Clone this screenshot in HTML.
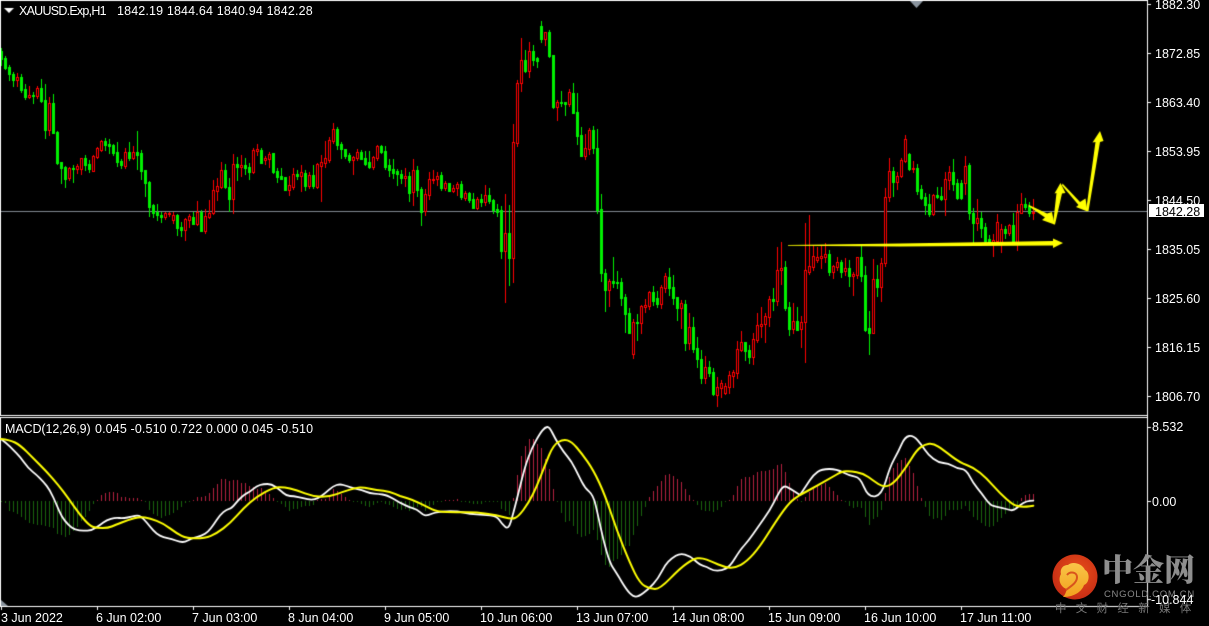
<!DOCTYPE html>
<html><head><meta charset="utf-8"><title>XAUUSD H1</title>
<style>
html,body{margin:0;padding:0;background:#000;width:1209px;height:626px;overflow:hidden}
#w{position:relative;width:1209px;height:626px;background:#000;overflow:hidden;font-family:"Liberation Sans","Noto Sans CJK SC",sans-serif;font-size:12.5px;color:#fff}
canvas,svg{position:absolute;left:0;top:0}
.t{position:absolute;white-space:pre;line-height:14px;height:14px}
</style></head><body><div id="w">
<canvas id="c" width="1209" height="626"></canvas>
<svg width="1209" height="626" viewBox="0 0 1209 626">
<defs>
<radialGradient id="rg" cx="55%" cy="40%" r="65%"><stop offset="0" stop-color="#e9501a"/><stop offset="1" stop-color="#c42a14"/></radialGradient>
<linearGradient id="yg" x1="0" y1="0" x2="0" y2="1"><stop offset="0" stop-color="#f9c548"/><stop offset="1" stop-color="#f2a21e"/></linearGradient>
</defs>
<circle cx="1075" cy="577" r="22.5" fill="url(#rg)"/>
<path d="M1063,597 C1075,597 1082,591 1084,585 C1090,583 1090,572 1085,570 C1082,563 1072,561 1068,565 C1062,565 1060,570 1061,574 C1057,581 1062,588 1067,589 C1066,592 1065,595 1063,597 Z" fill="url(#yg)"/>
<path d="M1067,575 C1070,571 1077,572 1077,577 C1077,583 1071,586 1066,590" fill="none" stroke="#d9541c" stroke-width="2"/>
</svg>
<div class="t" style="left:19px;top:4px;letter-spacing:-0.75px">XAUUSD.Exp,H1</div>
<div class="t" style="left:117px;top:4px;letter-spacing:0.15px">1842.19 1844.64 1840.94 1842.28</div>
<div class="t" style="left:1155px;top:-2px">1882.30</div>
<div class="t" style="left:1155px;top:47px">1872.85</div>
<div class="t" style="left:1155px;top:96px">1863.40</div>
<div class="t" style="left:1155px;top:145px">1853.95</div>
<div class="t" style="left:1155px;top:194px">1844.50</div>
<div class="t" style="left:1155px;top:243px">1835.05</div>
<div class="t" style="left:1155px;top:292px">1825.60</div>
<div class="t" style="left:1155px;top:341px">1816.15</div>
<div class="t" style="left:1155px;top:390px">1806.70</div>
<div style="position:absolute;left:1149px;top:204px;width:55px;height:13px;background:#fff"></div>
<div class="t" style="left:1155px;top:205px;color:#000">1842.28</div>
<div class="t" style="left:5px;top:422px;letter-spacing:-0.1px">MACD(12,26,9)</div>
<div class="t" style="left:95px;top:422px;letter-spacing:0.13px">0.045 -0.510 0.722 0.000 0.045 -0.510</div>
<div class="t" style="left:1152px;top:420px">8.532</div>
<div class="t" style="left:1152px;top:495px">0.00</div>
<div class="t" style="left:1102px;top:551px;height:40px;line-height:40px;font-family:'Liberation Serif','Noto Serif CJK SC',serif;font-weight:900;font-size:31px;color:#8e8e8e">中金网</div>
<div class="t" style="left:1104px;top:588px;font-size:9.5px;letter-spacing:0.7px;color:#888">CNGOLD.COM.CN</div>
<div class="t" style="left:1055px;top:602px;font-size:11.5px;letter-spacing:9.3px;color:#777">中文财经新媒体</div>
<div class="t" style="left:1151px;top:593px">-10.844</div>
<div class="t" style="left:1px;top:611px">3 Jun 2022</div>
<div class="t" style="left:96px;top:611px">6 Jun 02:00</div>
<div class="t" style="left:192px;top:611px">7 Jun 03:00</div>
<div class="t" style="left:288px;top:611px">8 Jun 04:00</div>
<div class="t" style="left:384px;top:611px">9 Jun 05:00</div>
<div class="t" style="left:480px;top:611px">10 Jun 06:00</div>
<div class="t" style="left:576px;top:611px">13 Jun 07:00</div>
<div class="t" style="left:672px;top:611px">14 Jun 08:00</div>
<div class="t" style="left:768px;top:611px">15 Jun 09:00</div>
<div class="t" style="left:864px;top:611px">16 Jun 10:00</div>
<div class="t" style="left:960px;top:611px">17 Jun 11:00</div>
</div>
<script>
var A="g145,153,177,195 g168,174,203,206 g195,201,222,240 g215,222,240,258 r218,231,240,258 g222,231,270,276 g252,267,291,297 r258,285,291,295 g276,285,288,309 r258,264,288,294 g237,264,303,306 g252,300,390,414 r291,309,390,405 g282,309,399,400 g393,396,489,492 g486,486,504,549 g498,500,537,561 r500,504,534,540 g495,504,507,546 r492,498,507,519 r474,474,507,522 g465,474,495,510 g480,492,507,516 r465,468,513,513 r441,444,471,474 r420,423,450,453 g414,423,435,450 g417,432,438,459 g432,435,459,465 g426,456,486,498 g477,483,495,504 r444,456,498,504 g426,456,474,480 r438,456,474,477 g393,456,465,507 g450,459,513,537 g510,510,549,588 g543,546,621,648 g612,615,639,651 g612,636,645,660 g636,645,651,666 r636,639,651,657 r636,639,642,648 r636,645,660,669 g642,645,684,705 g666,681,690,708 r654,657,690,720 r642,648,660,681 g636,651,672,672 r603,636,672,675 g630,636,693,693 r627,648,693,699 r600,639,651,654 r540,570,639,642 r534,558,573,600 r486,510,561,564 g492,510,561,564 g534,561,597,633 r462,492,597,639 g471,492,501,540 r465,495,501,528 g474,495,504,522 g489,501,516,537 r444,450,516,519 r432,447,453,465 g444,450,489,489 r468,474,480,492 r456,462,477,501 g459,459,516,519 g504,513,531,546 g504,528,537,537 g531,531,570,570 r528,555,570,585 r504,522,561,567 g510,522,528,537";
var B="r495,516,528,573 g510,519,558,570 r516,525,558,564 g495,525,558,564 r489,492,561,564 r465,486,498,603 r423,474,489,501 r411,420,480,486 r369,387,423,429 g381,387,435,447 g426,432,447,474 g447,447,468,474 g459,465,480,486 r468,471,480,522 r447,456,474,480 g450,456,477,477 g453,474,492,495 g453,486,501,504 r468,471,501,507 r435,438,474,480 g435,438,456,459 g438,453,501,507 g477,495,510,528 g477,507,519,534 g507,513,522,555 g510,522,534,549 r504,528,534,558 g516,528,579,603 r477,510,576,615 g498,510,570,588 g561,567,636,675 r567,582,633,645 r516,537,585,597 r510,537,540,549 r516,528,537,555 g516,525,564,570 r543,549,564,570 g549,549,573,573 r555,564,573,576 r546,552,564,585 g543,552,591,597 r573,579,594,600 g576,579,600,606 g579,597,624,624 r591,597,624,627 g582,597,606,618 r555,585,606,615 g564,585,603,609 g597,600,630,639 g612,627,636,648 g618,630,753,774 r582,699,753,906 g615,699,774,855 r372,426,774,846 r240,249,429,438 r114,180,249,273 g150,180,213,216 r126,153,213,231 g135,153,180,195 g171,174,183,201 g63,78,117,126 r96,96,117,135 g90,96,168,171 g165,165,321,324 r300,306,321,360 g273,306,309,318 g306,306,312,345 r267,276,312,318 g249,279,339,339 g279,336,408,432 g381,405,468,468 r402,444,468,477 r384,390,447,462 g378,390,444,459 g387,444,630,639";
var C="g-168,-123,69,93 g57,69,120,183 r87,93,120,168 g21,93,99,111 g63,96,99,114 g84,96,144,165 g132,141,192,246 g174,189,249,249 r207,216,312,324 g192,216,219,270 r165,168,219,249 r147,165,171,186 r123,126,168,177 g108,126,153,165 g123,144,162,171 r105,111,162,174 r69,78,114,126 g54,81,114,135 g75,111,144,162 g141,141,174,210 r150,159,174,234 g150,162,279,300 r189,231,279,297 g201,231,297,306 g261,294,327,351 g300,327,384,399 r318,351,384,399 g333,351,369,378 g354,366,432,435 r381,411,435,468 r390,399,414,441 r399,408,429,432 r363,375,411,429 r360,366,378,411 r273,297,369,384 r243,276,300,303 g276,276,303,330 g285,300,321,339 r249,267,321,342 r189,225,270,276 r171,222,228,261 r189,198,222,276 r138,147,201,228 g114,147,153,180 r-9,60,153,165 r-24,54,60,102 g33,51,174,180 g156,171,237,255 r159,213,237,249 g171,213,240,240 r198,216,237,291 r-81,60,216,336 r-105,48,66,72 r-15,18,51,60 r-9,21,30,36 r-15,18,24,54 r-21,12,21,36 g0,12,66,75 r45,48,66,84 r21,36,51,60 g30,36,66,81 r24,54,63,75 g30,54,78,108 r66,72,78,135 r21,21,75,84 g-15,21,78,93 g48,75,240,243 g183,234,249,312 r27,87,249,249 g45,87,111,138 r24,39,111,153 r-186,-159,39,48 r-276,-237,-159,-147 g-249,-237,-204,-162 r-234,-222,-204,-183";
var D="r114,120,168,171 r45,57,123,126 g99,102,147,150 r123,144,147,156 g132,144,213,222 g195,207,234,237 g219,231,255,282 g222,252,282,288 r222,225,282,285 g201,225,231,234 g201,228,237,240 r156,177,237,285 r138,156,180,207 g117,156,192,210 g177,189,234,237 g180,189,234,237 r108,138,189,222 g129,135,279,297 g264,279,309,366 r237,294,309,330 g276,294,324,351 g309,321,363,366 g345,357,366,372 r342,360,366,408 r282,306,363,366 r312,327,366,396 g318,327,339,354 r312,315,339,345 g279,315,366,366 r252,276,366,390 r219,252,279,279 g234,252,261,267 g246,258,279,288 r237,276,279,297";
var H5=[0,-6,-30,-33,-39,-48,-57,-66,-68,-72,-72,-75,-78,-81,-99,-102,-108,-102,-90,-78,-60,-48,-30,-9,3,18,24,27,27,24,12,12,9,9,9,3,-3,-27,-39,-45,-51,-45,-42,-36,-27,-18,-6,-3,3,12,12,15,24,39,51,66,66,60,63,63,54,54,45,42,36,39,27,21,9,-3,-9,-18,-30,-24,-24,-18,-15,-15,-12,3,6,6,12,36,30,21,12,3,-3,-3,-9,-15,-18,-12,-6,-3,-9,-12,-18,-24,
-27,-24,-30,-27,-18,-18,-30,-15,-12,0,0,3,3,3,6,0,-3,-6,-9,-9,-9,-3,-3,-3,-3,-24,-30,-42,9,78,135,165,186,186,171,159,126,96,36,-3,-36,-63,-60,-75,-99,-108,-105,-99,-87,-117,-162,-192,-198,-180,-174,-162,-135,-135,-102,-75,-45,-18,12,30,45,60,78,81,75,66,57,36,18,3,-12,-27,-30,-30,-33,-27,-18,-3,3,18,45,66,72,72,78,87,90,90,93,96,108,111,87,54,30,6,
-3,12,27,39,45,48,54,42,30,18,3,-3,-15,-21,-18,-21,-48,-72,-54,-48,-27,24,72,99,114,123,129,105,84,45,9,-18,-45,-54,-51,-57,-45,-27,-27,-27,-24,-15,-30,-48,-57,-66,-75,-78,-75,-63,-51,-39,-24,-24,-15,9,18,21,21];
var W=[[0,[3,87,20,100,40,120,60,140,85,175,110,195,130,215,150,240,170,285,185,320,205,345,225,360,250,362,275,362,300,345,320,330,345,323,370,325,395,320,415,315,430,325,450,350,470,372,490,382,515,387,540,396,555,396,575,385,605,378,625,365,640,345,660,315,680,298,695,295,715,270,735,252,750,245,770,228,790,222,815,222,840,240,860,258,880,258,910,265,935,270,955,265,975,250,1000,228,1020,222,1040,228,1060,235,1085,240,1110,250,1135,252,1160,255,1200,278]],
[400,[0,278,30,293,50,297,70,316,85,316,110,305,170,303,210,312,250,314,290,318,305,340,325,360,340,310,355,250,375,170,395,115,420,70,435,52,448,50,465,85,490,125,515,155,535,195,555,235,580,255,595,320,610,390,630,460,650,490,680,540,700,560,715,560,745,538,775,505,795,465,815,445,840,430,870,438,900,465,920,470,940,482,965,482,990,470,1020,420,1045,393,1075,350,1110,300,1130,260,1150,226,1170,235,1200,255]],
[800,[0,255,20,225,40,195,65,177,110,177,150,198,180,202,205,262,245,256,270,170,295,125,315,80,340,76,365,105,385,135,415,158,445,160,470,175,498,178,520,220,545,250,570,285,590,290,620,297,640,303,660,285,680,273,700,272]]];
var Y=[[0,[3,87,30,90,60,105,100,145,140,185,175,225,205,265,240,315,270,348,290,354,325,354,345,345,385,330,420,320,450,325,490,340,530,370,560,385,615,385,650,370,690,340,730,295,770,260,820,233,850,231,890,240,940,260,990,260,1030,245,1070,233,1090,232,1130,240,1170,245,1200,258]],
[400,[0,258,40,270,80,290,110,305,170,307,230,307,290,315,335,328,355,320,385,280,410,230,435,165,460,105,490,87,515,95,545,130,580,180,615,255,650,360,690,460,720,520,750,537,780,537,840,475,880,447,905,443,935,455,975,472,1005,474,1040,455,1080,410,1130,330,1170,275,1200,255]],
[800,[0,255,50,228,90,205,125,185,150,183,190,190,220,212,250,232,280,222,320,170,350,120,375,103,400,100,430,120,480,158,520,172,560,205,600,250,640,285,660,290,680,290,700,287]]];
var g=document.getElementById('c').getContext('2d');
function R(c,x,y,w,h){g.fillStyle=c;g.fillRect(x,y,w,h)}
R('#000',0,0,1209,626);
R('#808890',1,211,1146,1);
var i=0;
function draw(s,off){s.split(' ').forEach(function(k){
 var col=1+4*i;i++;
 var red=k[0]=='r',c=red?'#ff0000':'#00f000';
 var v=k.slice(1).split(',').map(function(n){return Math.round(off+(+n)/3)});
 R(c,col,v[0],1,v[3]-v[0]+1);
 R(c,col-1,v[1],3,Math.max(v[2]-v[1]+1,1));
 if(red&&v[2]-v[1]>1)R('#000',col,v[1]+1,1,v[2]-v[1]-1);
})}
draw(A,0);draw(B,0);draw(C,250);draw(D,120);
R('#fff',0,0,1148,1);R('#fff',0,0,1,416);R('#fff',0,415,1148,1);R('#fff',0,417,1148,1);
R('#fff',0,417,1,190);R('#fff',0,606,1148,1);R('#fff',1147,0,1,607);
[4,53,102,151,200,249,298,347,396,427,501,599].forEach(function(y){R('#fff',1147,y,4,1)});
[1,97,193,289,385,481,577,673,769,865,961].forEach(function(x){R('#fff',x,606,1,4)});
function P(c,p){g.fillStyle=c;g.beginPath();g.moveTo(p[0],p[1]);for(var j=2;j<p.length;j+=2)g.lineTo(p[j],p[j+1]);g.closePath();g.fill()}
P('#8a949e',[910,1,923,1,916.5,8]);
P('#fff',[4,8,14,8,9,13]);
P('#8a949e',[1,600,8,606,1,606]);
H5.forEach(function(h,n){
 var col=1+4*n,a=Math.round(Math.abs(h)/3);
 if(a==0)a=1;
 if(h>0)R('#b3203f',col,501-a,1,a);else R('#1a640e',col,501,1,a);
});
function L(set,c,lw){g.strokeStyle=c;g.lineWidth=lw;g.lineJoin='round';g.lineCap='round';g.beginPath();var pts=[];
 set.forEach(function(s){var o=s[0],a=s[1];for(var j=0;j<a.length;j+=2)pts.push([o+a[j]/3,410+a[j+1]/3])});
 g.moveTo(pts[0][0],pts[0][1]);
 for(var k=1;k<pts.length-1;k++){var mx=(pts[k][0]+pts[k+1][0])/2,my=(pts[k][1]+pts[k+1][1])/2;g.quadraticCurveTo(pts[k][0],pts[k][1],mx,my)}
 var e=pts[pts.length-1];g.lineTo(e[0],e[1]);g.stroke()}
L(W,'#ffffff',1.8);L(Y,'#ffff00',2);
var Ye='#ffff00';
P(Ye,[788,245,900,243.5,1053,241,1053,238.5,1063,243,1053,248,1053,245.5,900,246.5,788,245.8]);
P(Ye,[1028,204.5,1047,213.5,1052,212,1054.5,224.5,1042,220,1045,217.5,1029,206.5]);
P(Ye,[1053,224,1056.5,193,1054.5,193.5,1060.5,183,1065.5,193,1062,193.5,1055,224.5]);
P(Ye,[1062.5,183.5,1080,202,1085.5,198.5,1087.5,211.5,1076,207,1078.5,205,1062,185.5]);
P(Ye,[1086,211,1095.5,142,1092.5,142.5,1100,131,1103.5,141,1100,142,1088.5,211]);
</script>
</body></html>
